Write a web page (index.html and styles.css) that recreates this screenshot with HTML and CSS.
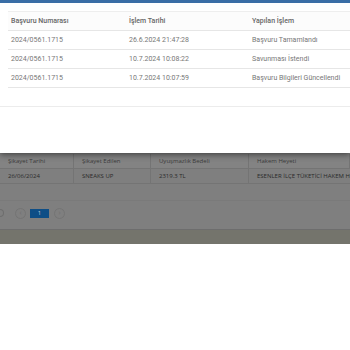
FILE: index.html
```html
<!DOCTYPE html>
<html lang="tr">
<head>
    <meta charset="UTF-8">
    <meta name="viewport" content="width=device-width, initial-scale=1.0">
    <title>Başvuru Geçmişi</title>
    <link rel="stylesheet" href="styles.css">
</head>
<body>
    <div class="modal">
        <div class="modal-top"></div>
        <div class="modal-body">
            <table class="history">
                <thead>
                    <tr>
                        <th class="c1">Başvuru Numarası</th>
                        <th class="c2">İşlem Tarihi</th>
                        <th>Yapılan İşlem</th>
                    </tr>
                </thead>
                <tbody>
                    <tr>
                        <td>2024/0561.1715</td>
                        <td>26.6.2024 21:47:28</td>
                        <td>Başvuru Tamamlandı</td>
                    </tr>
                    <tr>
                        <td>2024/0561.1715</td>
                        <td>10.7.2024 10:08:22</td>
                        <td>Savunması İstendi</td>
                    </tr>
                    <tr>
                        <td>2024/0561.1715</td>
                        <td>10.7.2024 10:07:59</td>
                        <td>Başvuru Bilgileri Güncellendi</td>
                    </tr>
                </tbody>
            </table>
        </div>
        <div class="modal-footer"></div>
    </div>

    <!-- arka plandaki sayfa, karartılmış -->
    <div class="backdrop">
        <table class="complaints">
            <tr class="head">
                <td class="k1">Şikayet Tarihi</td>
                <td class="k2">Şikayet Edilen</td>
                <td class="k3">Uyuşmazlık Bedeli</td>
                <td>Hakem Heyeti</td>
            </tr>
            <tr>
                <td>26/06/2024</td>
                <td>SNEAKS UP</td>
                <td>2319.3 TL</td>
                <td class="cut">ESENLER İLÇE TÜKETİCİ HAKEM HEYETİ</td>
            </tr>
        </table>
        <div class="pager">
            <span class="pg-edge"></span>
            <span class="pg-round first">‹</span>
            <span class="pg-current">1</span>
            <span class="pg-round">›</span>
        </div>
        <div class="page-foot"></div>
    </div>
</body>
</html>
```

FILE: styles.css
```css
body {
    margin: 0;
    background: #fff;
    font-family: Roboto, 'Liberation Sans', sans-serif;
    overflow: hidden;
}

.modal {
    position: relative;
    z-index: 2;
    height: 153px;
    background: #fff;
    box-shadow: 0 2px 6px rgba(0,0,0,0.45);
}

.modal-top {
    height: 3px;
    background: #3a6ea6;
}

.modal-body {
    padding: 8px 0 0 8px;
}

.history {
    width: 100%;
    border-collapse: collapse;
    font-size: 7px;
    color: #777;
}

.history th {
    text-align: left;
    font-weight: 500;
    color: #666;
    height: 18px;
    padding: 0 3px;
    background: #fcfcfc;
    border-top: 1px solid #eee;
    border-bottom: 1px solid #e6e6e6;
}

.history td {
    height: 18px;
    padding: 0 3px;
    border-bottom: 1px solid #e6e6e6;
}

.history .c1 { width: 112px; }
.history .c2 { width: 117px; }

.modal-footer {
    margin-top: 18px;
    border-top: 1px solid #ececec;
}

.backdrop {
    height: 91px;
    background: #7f7f7f;
    display: flex;
    flex-direction: column;
    font-family: 'Open Sans', 'Liberation Sans', sans-serif;
}

.complaints {
    margin-top: 1px;
    width: 100%;
    table-layout: fixed;
    border-collapse: collapse;
    font-size: 6px;
    color: #2a2a2a;
}

.complaints td {
    padding: 0 0 0 8px;
    height: 14px;
    border-right: 1px solid #747474;
    border-bottom: 1px solid #747474;
    white-space: nowrap;
    overflow: hidden;
}

.complaints .head td {
    background: #838383;
    color: #3a3a3a;
}

.complaints .k1 { width: 65px; }
.complaints .k2 { width: 68px; }
.complaints .k3 { width: 89px; }

.complaints .cut {
    overflow: visible;
    border-right: none;
}

.pager {
    margin-top: 16px;
    border-top: 1px solid #7a7a7a;
    display: flex;
    align-items: center;
    gap: 4px;
    height: 24px;
}

.pg-edge {
    width: 3px;
    height: 6px;
    border: 1px solid #6e6e6e;
    border-left: none;
    border-radius: 0 4px 4px 0;
}

.pg-round {
    width: 9px;
    height: 9px;
    border: 1px solid #747474;
    border-radius: 50%;
    color: #6e6e6e;
    font-size: 7px;
    line-height: 8px;
    text-align: center;
    margin-left: 1px;
}

.pg-round.first { margin-left: 7px; }

.pg-current {
    width: 19px;
    height: 9px;
    background: #0e4e86;
    color: #b8c8d8;
    font-size: 6px;
    line-height: 9px;
    text-align: center;
}

.page-foot {
    margin-top: 4px;
    flex: 1;
    background: #74746c;
    border-top: 1px solid #6d6d6d;
}
```
